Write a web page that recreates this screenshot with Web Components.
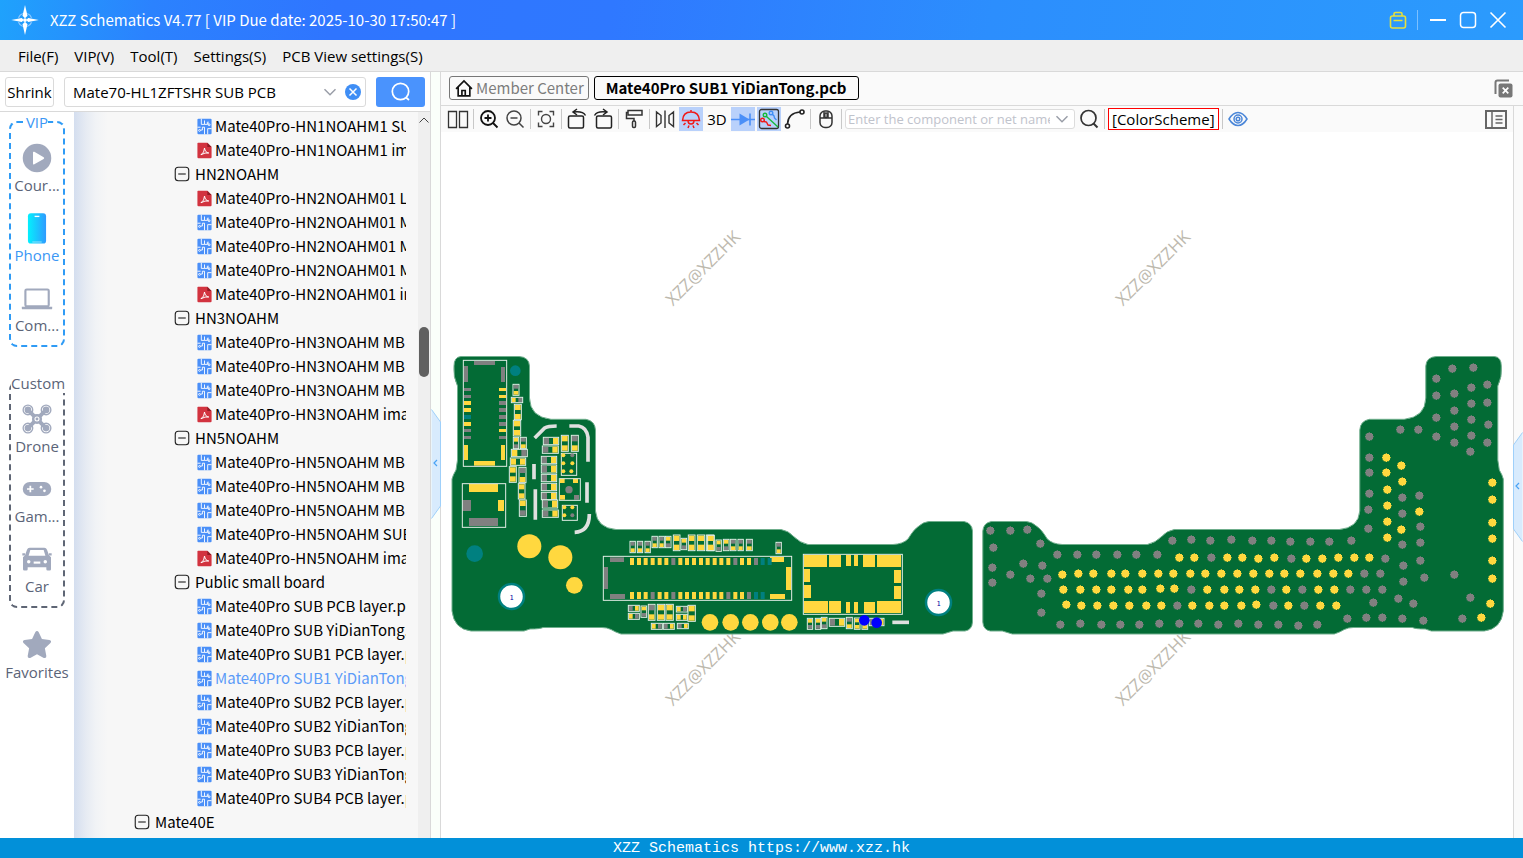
<!DOCTYPE html>
<html lang="en">
<head>
<meta charset="utf-8">
<title>XZZ Schematics</title>
<style>
  html, body {
    height: 100%;
    margin: 0;
  }

  body {
    --label-font: 'Noto Sans CJK SC', 'Noto Sans', sans-serif;
    font-family: 'Open Sans', 'Noto Sans', sans-serif;
    font-size: 15px;
    line-height: 24px;
    color: #000;
    overflow: hidden;
  }
</style>
</head>
<body>
<app-shell>
  <title-bar slot="title">XZZ Schematics V4.77 [ VIP Due date: 2025-10-30 17:50:47 ]</title-bar>
  <menu-bar slot="menu" items="File(F)|VIP(V)|Tool(T)|Settings(S)|PCB View settings(S)"></menu-bar>
  <search-bar slot="search" value="Mate70-HL1ZFTSHR SUB PCB"></search-bar>

  <category-rail slot="rail">
    <category-group label="VIP" tone="vip">
      <category-item icon="course">Cour...</category-item>
      <category-item icon="phone" active>Phone</category-item>
      <category-item icon="laptop">Com...</category-item>
    </category-group>
    <category-group label="Custom">
      <category-item icon="drone">Drone</category-item>
      <category-item icon="gamepad">Gam...</category-item>
      <category-item icon="car">Car</category-item>
    </category-group>
    <category-item icon="star">Favorites</category-item>
  </category-rail>

  <file-tree slot="tree"></file-tree>
  <panel-handle slot="split" side="left"></panel-handle>

  <tab-strip slot="tabs"></tab-strip>
  <tool-bar slot="tools"></tool-bar>
  <board-view slot="canvas"></board-view>
  <panel-handle slot="dock" side="right"></panel-handle>
  <status-bar slot="status">XZZ Schematics https://www.xzz.hk</status-bar>
</app-shell>

<script>
// Icons, all on a 24x24 grid
const ICONS = {
  logo: '<g fill="#fff"><path d="M12 0l2 8.6-2 2-2-2zM12 24l2-8.6-2-2-2 2zM1 12l8.400-1.600 1.600 1.600-1.600 1.600zM23 12l-8.400-1.600-1.600 1.600 1.600 1.600z"/><circle cx="12" cy="12" r="1.500"/></g><circle cx="12" cy="12" r="5.500" fill="none" stroke="#8cc8ff" stroke-width="1" stroke-dasharray="5 3.600" stroke-dashoffset="-1.800"/>',
  bag: '<g fill="none" stroke="#e6e03c" stroke-width="1.600"><rect x="4.500" y="8" width="15" height="12" rx="2"/><path d="M8 8V6q0-1.500 1.500-1.500h5Q16 4.500 16 6v2M7.500 12.500h9"/></g>',
  minimize: '<path d="M4 12h16" stroke="#fff" stroke-width="2"/>',
  maximize: '<rect x="4.500" y="4.500" width="15" height="15" rx="3" fill="none" stroke="#fff" stroke-width="1.500"/>',
  close: '<path d="M4.500 4.500l15 15M19.500 4.500l-15 15" stroke="#fff" stroke-width="1.600"/>',
  chevron: '<path d="M6 9l6 6 6-6" fill="none" stroke="#9a9ea8" stroke-width="1.600"/>',
  up: '<path d="M3 15l9-9 9 9" fill="none" stroke="#444" stroke-width="2"/>',
  clear: '<circle cx="12" cy="12" r="8" fill="#3f8ef5"/><path d="M8.500 8.500l7 7M15.500 8.500l-7 7" stroke="#fff" stroke-width="1.500"/>',
  searchWhite: '<circle cx="11.500" cy="11.500" r="8.200" fill="none" stroke="#fff" stroke-width="1.700"/><path d="M17 17.500l3 2.500" stroke="#fff" stroke-width="1.700"/>',
  search: '<circle cx="11.500" cy="11" r="7.500" fill="none" stroke="#333" stroke-width="1.700"/><path d="M16.500 16.500l4 4" stroke="#333" stroke-width="2"/>',
  course: '<circle cx="12" cy="12" r="10.700" fill="#a1a9bd"/><path d="M9 7.800v8.400q0 1 1 .5l7-4q.8-.6 0-1.200l-7-4.100q-1-.5-1 .4z" fill="#fff"/>',
  phone: '<defs><linearGradient id="p"><stop offset="0" stop-color="#04f0fd"/><stop offset="1" stop-color="#2f9bff"/></linearGradient></defs><rect x="5.200" y=".9" width="13.600" height="22.800" rx="2.200" fill="url(#p)"/><path d="M10.200 3.300h3.600" stroke="#fff" stroke-width="1"/><path d="M8.500 22.500h7" stroke="#9fe6ff" stroke-width=".7"/>',
  laptop: '<rect x="3.300" y="5.600" width="17.500" height="12.700" rx="1" fill="none" stroke="#a1a9bd" stroke-width="1.600"/><path d="M.6 18.500h22.800v1.300q0 .7-.8.700H1.400q-.8 0-.8-.7z" fill="#a1a9bd"/>',
  drone: '<g fill="none" stroke="#a1a9bd"><path d="M5 5l14 14M19 5L5 19" stroke-width="3"/><circle cx="5.200" cy="5.200" r="3.600" stroke-width="1"/><circle cx="18.800" cy="5.200" r="3.600" stroke-width="1"/><circle cx="5.200" cy="18.800" r="3.600" stroke-width="1"/><circle cx="18.800" cy="18.800" r="3.600" stroke-width="1"/></g><g fill="#a1a9bd"><circle cx="5.200" cy="5.200" r="2.500"/><circle cx="18.800" cy="5.200" r="2.500"/><circle cx="5.200" cy="18.800" r="2.500"/><circle cx="18.800" cy="18.800" r="2.500"/><circle cx="12" cy="12" r="3.800"/></g><circle cx="12" cy="12" r="1.500" fill="none" stroke="#fff" stroke-width=".8"/>',
  gamepad: '<rect x="1.300" y="6.700" width="21.400" height="10.600" rx="5.300" fill="#a1a9bd"/><path d="M7 9.500v5M4.500 12h5" stroke="#fff" stroke-width="1.300"/><circle cx="15" cy="10.600" r="1" fill="#fff"/><circle cx="17.600" cy="13.400" r="1" fill="#fff"/>',
  car: '<path d="M6.500 3.500h11q1.500 0 2 1.500l1.500 4.200 1.500 1.500v9q0 1-1 1h-1.500q-1 0-1-1v-1.500H5v1.500q0 1-1 1H2.500q-1 0-1-1v-9L3 9.200 4.500 5q.5-1.500 2-1.500z" fill="#a1a9bd"/><path d="M7 5.300h10l1.300 4.200H5.700z" fill="#fff"/><path d="M1 8.500h2M21 8.500h2" stroke="#a1a9bd" stroke-width="1.600"/><circle cx="5.800" cy="14" r="1.300" fill="#fff"/><circle cx="18.200" cy="14" r="1.300" fill="#fff"/><path d="M9.500 14.700h5" stroke="#fff" stroke-width="1.600"/>',
  star: '<path d="M12 1.500q.8 0 1.300 1l2.400 5 5.600.8q2 .5.800 2.200l-4.200 4 1.100 5.800q.1 2-1.900 1.400L12 19l-5.100 2.700q-2 .5-1.900-1.400l1.100-5.800-4.200-4q-1.200-1.700.8-2.200l5.600-.8 2.400-5q.5-1 1.300-1z" fill="#a1a9bd"/>',
  board: '<rect x="2" y="1" width="20" height="22" rx="1.500" fill="#4a8ff8"/><g fill="none" stroke="#fff" stroke-width="1.300"><path d="M7.500 1v8H12V3.500M12 9h4V6M17 9.500V5M12 23V13H9v4H6.500M16.500 23v-8H22M2 13h4.500"/><circle cx="18.500" cy="9.500" r="1.300"/><circle cx="5" cy="17.500" r="1.300"/></g>',
  pdf: '<path d="M3 1h13l6 6v14.500q0 1.500-1.500 1.500h-17Q2 23 2 21.500v-19Q2 1 3 1z" fill="#d2333f"/><path d="M16 1l6 6h-6z" fill="#8e1b25"/><path d="M7 18q5-3 5-9.500Q13 15 18 15.500q-5-1-11 2.500z" fill="none" stroke="#fff" stroke-width="1.400"/>',
  minus: '<rect x="3" y="3" width="18" height="18" rx="4" fill="none" stroke="#222" stroke-width="1.500"/><path d="M7 12h10" stroke="#222" stroke-width="1.500"/>',
  home: '<g fill="none" stroke="#111" stroke-width="2"><path d="M2.500 13L12 3.500 21.500 13M5 11v10.500h14V11M9.500 21.500v-6.500h4v6.500"/></g>',
  closeAll: '<path d="M4.500 18V6.500q0-2 2-2H18" fill="none" stroke="#777" stroke-width="2"/><rect x="7.500" y="7.500" width="14" height="14" rx="2" fill="#777"/><path d="M11.700 11.700l5.600 5.600M17.300 11.700l-5.600 5.600" stroke="#fff" stroke-width="1.700"/>',
  dock: '<rect x="2" y="4" width="20" height="17" fill="none" stroke="#666" stroke-width="2"/><path d="M8 4v17" stroke="#666" stroke-width="1.500"/><path d="M11.500 9h7M11.500 12.500h7M11.500 16h7" stroke="#666" stroke-width="1.300"/>',
  columns: '<path d="M2.500 4.500h8v16h-8zM13.500 4.500h8v16h-8z" fill="none" stroke="#333" stroke-width="1.300"/>',
  zoomIn: '<g fill="none" stroke="#111" stroke-width="1.800"><circle cx="11" cy="11" r="7"/><path d="M16 16l4.500 4.500M7.500 11h7M11 7.500v7"/></g>',
  zoomOut: '<g fill="none" stroke="#444" stroke-width="1.500"><circle cx="11" cy="11" r="7"/><path d="M16 16l4.500 4.500M7.500 11h7"/></g>',
  fit: '<g fill="none" stroke="#444" stroke-width="1.400"><circle cx="12" cy="12" r="4.500"/><path d="M4.500 8.500v-4h4M15.500 4.500h4v4M19.500 15.500v4h-4M8.500 19.500h-4v-4"/></g>',
  rotateLeft: '<g fill="none" stroke="#222" stroke-width="1.500"><rect x="3.500" y="9" width="15" height="12" rx="1.500"/><path d="M20.500 8.500Q18 4 9 5M12 2L8 5l4 3"/></g>',
  rotateRight: '<g fill="none" stroke="#222" stroke-width="1.500"><rect x="5.500" y="9" width="15" height="12" rx="1.500"/><path d="M3.500 8.500Q6 4 15 5M12 2l4 3-4 3"/></g>',
  paint: '<g fill="none" stroke="#333" stroke-width="1.500"><rect x="6" y="3.500" width="14" height="4.500"/><path d="M6 5.500H4.500v6H12V14"/><rect x="10.500" y="14" width="3" height="6.500" rx="1.200"/></g>',
  mirror: '<g fill="none" stroke="#333" stroke-width="1.400"><path d="M3.500 5v14.500l4.500-3.500V8.500zM20.500 5v14.500L16 16V8.500zM12 3.500v17.500"/></g>',
  lamp: '<g fill="none" stroke="#f01818" stroke-width="1.500"><path d="M3.500 13.500Q4 5 12 5t8.500 8.500zM12 5V3M9 13.500Q9 17 12 17t3-3.500"/><path d="M6.500 16l-2 2M10 18.500l-1 2.500M14 18.500l1 2.500M17.500 16l2 2"/></g>',
  diode: '<path d="M0 12.500h24" stroke="#4a8ff8" stroke-width="1.500"/><path d="M8.500 6.500l10 6-10 6z" fill="#4a8ff8"/><path d="M19 6.500v12" stroke="#4a8ff8" stroke-width="1.600"/>',
  route: '<rect x="2.500" y="2.500" width="19" height="19" rx="2" fill="none" stroke="#333" stroke-width="1.300"/><g fill="none" stroke-width="1.400"><g stroke="#16b83a"><circle cx="8" cy="8" r="1.800"/><path d="M9.500 9.500L21 20"/></g><g stroke="#3f8ef5"><circle cx="14" cy="6" r="1.800"/><path d="M15.500 7.500q2 1 2 3.500l2 2"/></g><g stroke="#f01818"><circle cx="5.500" cy="13" r="1.800"/><path d="M7 14.500l2.500.5 1.500 3 3 .5"/></g></g>',
  curve: '<g fill="none" stroke="#222" stroke-width="1.600"><circle cx="4.500" cy="19" r="2"/><circle cx="19" cy="5" r="2"/><path d="M4.500 17Q5 6 17 5"/></g>',
  mouse: '<g fill="none" stroke="#333" stroke-width="1.500"><rect x="6" y="4" width="12" height="16.500" rx="5"/><path d="M6 11h12M10 4.500V11M14 4.500V11"/><rect x="10.800" y="6" width="2.400" height="4.500" rx="1"/></g>',
  eye: '<g fill="none" stroke="#4a86d8" stroke-width="1.500"><path d="M3 12q4-6.500 9-6.500T21 12q-4 6.500-9 6.500T3 12z"/><circle cx="12" cy="12" r="4"/><circle cx="12" cy="12" r="1.800"/></g>'
};

class AppIcon extends HTMLElement {
  connectedCallback() {
    const size = this.getAttribute('size') || 24;
    this.attachShadow({ mode: 'open' }).innerHTML = `
      <style>
        :host { display: inline-flex; flex: none; }
        svg { display: block; }
      </style>
      <svg width="${size}" height="${size}" viewBox="0 0 24 24" aria-hidden="true">${ICONS[this.getAttribute('name')] || ''}</svg>
    `;
  }
}
customElements.define('app-icon', AppIcon);

class AppShell extends HTMLElement {
  constructor() {
    super();
    this.attachShadow({ mode: 'open' }).innerHTML = `
      <style>
        :host {
          display: grid;
          grid-template-rows: 40px 32px minmax(0, 1fr) 20px;
          height: 100vh;
        }
        main {
          display: grid;
          grid-template-columns: 430px 11px minmax(0, 1fr);
          min-height: 0;
        }
        .left {
          display: grid;
          grid-template-rows: 40px minmax(0, 1fr);
          min-height: 0;
        }
        .browse {
          display: grid;
          grid-template-columns: 74px minmax(0, 1fr);
          min-height: 0;
        }
        .right {
          display: grid;
          grid-template-rows: 34px minmax(0, 1fr);
          min-height: 0;
        }
        .work {
          display: grid;
          grid-template-columns: minmax(0, 1fr) 10px;
          min-height: 0;
        }
        .view {
          display: grid;
          grid-template-rows: 26px minmax(0, 1fr);
          min-height: 0;
        }
      </style>
      <slot name="title"></slot>
      <slot name="menu"></slot>
      <main>
        <section class="left">
          <slot name="search"></slot>
          <div class="browse"><slot name="rail"></slot><slot name="tree"></slot></div>
        </section>
        <slot name="split"></slot>
        <section class="right">
          <slot name="tabs"></slot>
          <div class="work">
            <div class="view"><slot name="tools"></slot><slot name="canvas"></slot></div>
            <slot name="dock"></slot>
          </div>
        </section>
      </main>
      <slot name="status"></slot>
    `;
  }
}
customElements.define('app-shell', AppShell);

class TitleBar extends HTMLElement {
  constructor() {
    super();
    this.attachShadow({ mode: 'open' }).innerHTML = `
      <style>
        :host {
          display: flex;
          align-items: center;
          padding: 0 13px 0 10px;
          color: #fff;
          font-family: var(--label-font);
          background: linear-gradient(100deg, #1fa2fc 0, #2b82fe 10%, #2f75ff 22%, #2f78ff 40%, #2c8efd 65%, #2b9bfd 100%);
        }
        .name { flex: 1; margin-left: 10px; }
        .tools { display: flex; align-items: center; gap: 6px; }
        button { display: flex; padding: 0; border: 0; background: none; }
        hr { width: 1px; height: 20px; margin: 0 2px 0 1px; border: 0; background: #7cc0ff; }
      </style>
      <app-icon name="logo" size="30"></app-icon>
      <span class="name"><slot></slot></span>
      <div class="tools">
        <button aria-label="Toolbox"><app-icon name="bag"></app-icon></button>
        <hr>
        <button aria-label="Minimize"><app-icon name="minimize"></app-icon></button>
        <button aria-label="Maximize"><app-icon name="maximize"></app-icon></button>
        <button aria-label="Close"><app-icon name="close"></app-icon></button>
      </div>
    `;
  }
}
customElements.define('title-bar', TitleBar);

class MenuBar extends HTMLElement {
  connectedCallback() {
    const items = this.getAttribute('items').split('|');
    this.attachShadow({ mode: 'open' }).innerHTML = `
      <style>
        :host {
          display: block;
          background: #efefef;
          border-bottom: 1px solid #d9d9d9;
        }
        nav { display: flex; align-items: center; gap: 16px; height: 100%; padding-left: 18px; }
        button { padding: 0; border: 0; background: none; font: inherit; color: inherit; }
      </style>
      <nav>${items.map(item => `<button>${item}</button>`).join('')}</nav>
    `;
  }
}
customElements.define('menu-bar', MenuBar);

class SearchBar extends HTMLElement {
  connectedCallback() {
    this.attachShadow({ mode: 'open' }).innerHTML = `
      <style>
        :host {
          display: flex;
          align-items: center;
          gap: 10px;
          box-sizing: border-box;
          padding: 0 5px;
          background: #fff;
          border-bottom: 1px solid #d9d9d9;
        }
        button { padding: 0; border: 0; background: none; font: inherit; color: inherit; display: flex; align-items: center; justify-content: center; }
        .shrink { box-sizing: border-box; width: 49px; height: 30px; border: 1px solid #dadada; border-radius: 3px; }
        .combo {
          flex: 1;
          min-width: 0;
          display: flex;
          align-items: center;
          box-sizing: border-box;
          height: 30px;
          padding: 0 0 0 8px;
          border: 1px solid #dadada;
          border-radius: 3px;
        }
        input { flex: 1; min-width: 0; padding: 0; border: 0; outline: 0; background: none; font: inherit; color: inherit; }
        .go { width: 49px; height: 30px; border-radius: 3px; background: #4a93fd; }
      </style>
      <button class="shrink">Shrink</button>
      <div class="combo">
        <input type="text" aria-label="Search files" value="${this.getAttribute('value')}">
        <button aria-label="History"><app-icon name="chevron" size="22"></app-icon></button>
        <button aria-label="Clear"><app-icon name="clear"></app-icon></button>
      </div>
      <button class="go" aria-label="Search"><app-icon name="searchWhite"></app-icon></button>
    `;
  }
}
customElements.define('search-bar', SearchBar);

class CategoryRail extends HTMLElement {
  constructor() {
    super();
    this.attachShadow({ mode: 'open' }).innerHTML = `
      <style>
        :host {
          display: flex;
          flex-direction: column;
          align-items: center;
          gap: 21px;
          background: #fff;
          overflow: hidden;
        }
        ::slotted(*) { flex: none; }
        ::slotted(category-group:nth-of-type(2)) { margin-top: 5px; }
      </style>
      <slot></slot>
    `;
  }
}
customElements.define('category-rail', CategoryRail);

class CategoryGroup extends HTMLElement {
  connectedCallback() {
    const vip = this.getAttribute('tone') === 'vip';
    this.attachShadow({ mode: 'open' }).innerHTML = `
      <style>
        :host { display: block; width: 56px; }
        fieldset {
          display: flex;
          flex-direction: column;
          align-items: center;
          gap: 16px;
          min-width: 0;
          margin: 0;
          padding: 10px 0 9px;
          border: 2px dashed ${vip ? '#2f9bf5' : '#5f6675'};
          border-radius: 8px;
        }
        legend {
          margin: 0 auto;
          padding: 0;
          line-height: 20px;
          color: ${vip ? '#3b97f5' : '#5b6478'};
        }
      </style>
      <fieldset>
        <legend>${this.getAttribute('label')}</legend>
        <slot></slot>
      </fieldset>
    `;
  }
}
customElements.define('category-group', CategoryGroup);

class CategoryItem extends HTMLElement {
  connectedCallback() {
    this.attachShadow({ mode: 'open' }).innerHTML = `
      <style>
        :host { display: block; }
        button {
          display: flex;
          flex-direction: column;
          align-items: center;
          padding: 0;
          border: 0;
          background: none;
          font: inherit;
          line-height: 22px;
          color: ${this.hasAttribute('active') ? '#3b97f5' : '#5b6478'};
        }
      </style>
      <button><app-icon name="${this.getAttribute('icon')}" size="32"></app-icon><slot></slot></button>
    `;
  }
}
customElements.define('category-item', CategoryItem);

// [kind, label]; kinds: group, board, pdf, root
const FILES = [
  ['board', 'Mate40Pro-HN1NOAHM1 SUB'],
  ['pdf', 'Mate40Pro-HN1NOAHM1 image'],
  ['group', 'HN2NOAHM'],
  ['pdf', 'Mate40Pro-HN2NOAHM01 LCD'],
  ['board', 'Mate40Pro-HN2NOAHM01 MB'],
  ['board', 'Mate40Pro-HN2NOAHM01 MB'],
  ['board', 'Mate40Pro-HN2NOAHM01 MB'],
  ['pdf', 'Mate40Pro-HN2NOAHM01 image'],
  ['group', 'HN3NOAHM'],
  ['board', 'Mate40Pro-HN3NOAHM MB'],
  ['board', 'Mate40Pro-HN3NOAHM MB'],
  ['board', 'Mate40Pro-HN3NOAHM MB'],
  ['pdf', 'Mate40Pro-HN3NOAHM image'],
  ['group', 'HN5NOAHM'],
  ['board', 'Mate40Pro-HN5NOAHM MB'],
  ['board', 'Mate40Pro-HN5NOAHM MB'],
  ['board', 'Mate40Pro-HN5NOAHM MB'],
  ['board', 'Mate40Pro-HN5NOAHM SUB'],
  ['pdf', 'Mate40Pro-HN5NOAHM image'],
  ['group', 'Public small board'],
  ['board', 'Mate40Pro SUB PCB layer.pcb'],
  ['board', 'Mate40Pro SUB YiDianTong.pcb'],
  ['board', 'Mate40Pro SUB1 PCB layer.pcb'],
  ['board', 'Mate40Pro SUB1 YiDianTong.pcb', true],
  ['board', 'Mate40Pro SUB2 PCB layer.pcb'],
  ['board', 'Mate40Pro SUB2 YiDianTong.pcb'],
  ['board', 'Mate40Pro SUB3 PCB layer.pcb'],
  ['board', 'Mate40Pro SUB3 YiDianTong.pcb'],
  ['board', 'Mate40Pro SUB4 PCB layer.pcb'],
  ['root', 'Mate40E']
];

class FileTree extends HTMLElement {
  constructor() {
    super();
    this.attachShadow({ mode: 'open' }).innerHTML = `
      <style>
        :host {
          display: grid;
          grid-template-columns: minmax(0, 1fr) 12px;
          min-height: 0;
          font-family: var(--label-font);
          background: linear-gradient(90deg, #d4deef 0, #e6ebf3 12px, #f1f3f6 22px, #f7f7f7 34px);
        }
        ul {
          margin: 0 12px 0 0;
          padding: 2px 0 0;
          list-style: none;
          overflow: hidden;
        }
        button {
          display: flex;
          align-items: center;
          gap: 4px;
          height: 24px;
          padding: 0;
          border: 0;
          background: none;
          font: inherit;
          color: inherit;
          white-space: nowrap;
        }
        .root { margin-left: 59px; }
        .group { margin-left: 99px; }
        .board, .pdf { gap: 2px; margin-left: 122px; }
        .current { color: #5b9bf8; }
        .scroll {
          display: grid;
          grid-template-columns: 100%;
          grid-template-rows: 18px 197fr 50px 461fr;
          justify-items: center;
          background: #efefef;
        }
        .scroll button { height: 18px; }
        .thumb { grid-row: 3; width: 10px; border-radius: 5px; background: #606060; }
      </style>
      <ul>
        ${FILES.map(([kind, label, current]) => `
          <li><button class="${kind}${current ? ' current' : ''}">${this.icon(kind)}<span>${label}</span></button></li>
        `).join('')}
      </ul>
      <div class="scroll">
        <button aria-label="Scroll up"><app-icon name="up" size="12"></app-icon></button>
        <div class="thumb"></div>
      </div>
    `;
  }

  icon(kind) {
    if (kind === 'board' || kind === 'pdf') {
      return `<app-icon name="${kind}" size="17"></app-icon>`;
    }
    return '<app-icon name="minus" size="18"></app-icon>';
  }
}
customElements.define('file-tree', FileTree);

class PanelHandle extends HTMLElement {
  connectedCallback() {
    const left = this.getAttribute('side') === 'left';
    const shape = left ? 'M.5 .5L9.500 13v84L.5 109.500' : 'M9.500 .5L.5 13v84l9 12.500';
    this.attachShadow({ mode: 'open' }).innerHTML = `
      <style>
        :host {
          display: flex;
          align-items: center;
          box-sizing: border-box;
          padding-top: ${left ? 18 : 30}px;
          background: ${left ? '#fafffa' : '#fafafa'};
          border-left: 1px solid #d9d9d9;
          border-right: ${left ? '1px solid #d9d9d9' : '0'};
        }
        button {
          display: flex;
          margin: ${left ? '0 -1px 0 0' : '0 0 0 -1px'};
          padding: 0;
          border: 0;
          background: none;
        }
      </style>
      <button aria-label="Toggle panel">
        <svg width="10" height="110" viewBox="0 0 10 110">
          <path d="${shape}" fill="#d8ebfd" stroke="#9fd0fa"/>
          <path d="M6 51L3 54l3 3" fill="none" stroke="#4aa3f5" stroke-width="1.200"/>
        </svg>
      </button>
    `;
  }
}
customElements.define('panel-handle', PanelHandle);

class TabStrip extends HTMLElement {
  constructor() {
    super();
    this.attachShadow({ mode: 'open' }).innerHTML = `
      <style>
        :host {
          display: flex;
          align-items: center;
          gap: 5px;
          box-sizing: border-box;
          padding: 0 8px 1px;
          font-family: var(--label-font);
          background: #fafafa;
          border-bottom: 1px solid #d9d9d9;
        }
        button { display: flex; align-items: center; padding: 0; border: 0; background: none; font: inherit; color: inherit; }
        .tab {
          box-sizing: border-box;
          height: 24px;
          gap: 2px;
          padding: 0 4px;
          border: 1px solid #777;
          border-radius: 3px;
          color: #7d7d7d;
        }
        .current { padding: 0 11px; border-color: #000; color: #000; font-weight: 700; }
        .all { margin-left: auto; }
      </style>
      <button class="tab"><app-icon name="home" size="20"></app-icon>Member Center</button>
      <button class="tab current">Mate40Pro SUB1 YiDianTong.pcb</button>
      <button class="all" aria-label="Close all tabs"><app-icon name="closeAll"></app-icon></button>
    `;
  }
}
customElements.define('tab-strip', TabStrip);

// '|' draws a separator, '*' marks a pressed tool
const TOOLS = ['columns', '|', 'zoomIn', 'zoomOut', '|', 'fit', '|', 'rotateLeft', 'rotateRight', '|', 'paint', '|',
  'mirror', '*lamp', '3D', '*diode', '*route', 'curve', '|', 'mouse', '|'];

class ToolBar extends HTMLElement {
  constructor() {
    super();
    this.attachShadow({ mode: 'open' }).innerHTML = `
      <style>
        :host {
          display: flex;
          align-items: center;
          gap: 2px;
          padding: 0 5px;
          background: #fafafa;
        }
        button {
          display: flex;
          align-items: center;
          justify-content: center;
          min-width: 24px;
          height: 24px;
          padding: 0;
          border: 0;
          background: none;
          font: inherit;
          color: inherit;
        }
        .on { background: #b9d1fb; }
        hr { width: 1px; height: 20px; margin: 0 1px; border: 0; background: #c8c8c8; }
        .net {
          display: flex;
          align-items: center;
          box-sizing: border-box;
          width: 230px;
          height: 20px;
          padding-left: 2px;
          border: 1px solid #dcdcdc;
          border-radius: 3px;
          background: #fff;
        }
        .net button { height: 18px; }
        input { flex: 1; min-width: 0; padding: 0; border: 0; outline: 0; background: none; font: inherit; font-size: 13px; }
        input::placeholder { color: #bfc3cc; opacity: 1; }
        .scheme { height: 22px; padding: 0 3px; border: 1px solid #f00; background: #fff; }
        .dock { margin-left: auto; }
      </style>
      ${TOOLS.map(tool => this.renderTool(tool)).join('')}
      <div class="net">
        <input type="text" aria-label="Component or net name" placeholder="Enter the component or net name to search">
        <button aria-label="Recent names"><app-icon name="chevron" size="22"></app-icon></button>
      </div>
      <button aria-label="Find"><app-icon name="search"></app-icon></button>
      <hr>
      <button class="scheme">[ColorScheme]</button>
      <hr>
      <button aria-label="Visibility"><app-icon name="eye"></app-icon></button>
      <button class="dock" aria-label="Side list"><app-icon name="dock"></app-icon></button>
    `;
  }

  renderTool(tool) {
    if (tool === '|') return '<hr>';
    if (tool === '3D') return '<button>3D</button>';
    const on = tool[0] === '*';
    const name = on ? tool.slice(1) : tool;
    return `<button class="${on ? 'on' : ''}" aria-label="${name}"><app-icon name="${name}"></app-icon></button>`;
  }
}
customElements.define('tool-bar', ToolBar);

const COLORS = { y: '#ffd83f', g: '#808080', t: '#008080', b: '#0000ff' };

// Board data uses 3 units per pixel. Each zone has its own origin.
// pads: color, x, y, w, h   parts: direction + two pad colors, x, y, w, h   dots: color, x, y, r
const ZONES = [
  {
    x: 448, y: 350,
    boxes: [[46, 31, 130, 318], [43, 401, 130, 131], [340, 310, 46, 66], [334, 386, 63, 65], [343, 466, 45, 45]],
    pads: `g 78 33 63 12,g 48 48 12 48,g 159 51 12 45,g 48 114 21 9,g 48 135 21 9,y 48 153 21 12,y 48 174 21 12,
      t 48 195 21 12,y 48 216 21 12,g 48 237 21 9,g 48 258 21 9,y 153 114 21 9,y 153 135 21 9,g 153 153 21 12,
      g 153 174 21 12,g 153 195 21 12,g 153 216 21 12,y 153 237 21 9,g 153 258 21 9,y 48 285 12 45,y 159 285 12 45,
      y 78 333 63 14,y 63 402 87 24,g 43 450 26 33,y 150 450 18 33,g 63 504 87 24,y 336 386 14 13,y 375 386 15 13,
      y 336 435 15 14,g 378 435 15 14`,
    parts: `vgy 195 103 18 33,hyg 190 142 34 16,vyy 199 163 21 46,vyy 196 211 22 47,vyg 196 262 16 34,vgy 217 262 18 34,
      hyg 190 298 48 22,hyy 187 324 46 22,vyy 184 350 21 47,vgy 213 352 21 46,vyy 211 401 20 46,vyg 214 450 21 49,
      hgy 286 262 46 22,hgy 283 288 48 22,hgy 280 319 46 22,hgy 280 345 46 24,hgy 280 373 46 22,hgy 280 400 46 22,
      hgy 280 427 46 22,hgy 283 450 46 24,hgy 283 480 48 22,vyy 340 256 21 48,vgy 370 256 21 48`,
    dots: `t 202 62 16,y 346 316 6,g 373 316 6,y 346 340 6,y 373 340 6,y 346 364 6,y 370 364 6,g 363 419 11,
      y 349 472 6,y 373 472 6,y 349 496 6,g 373 496 6`,
    silk: 'M260 264L290 234Q300 228 326 228M364 228H392Q416 232 420 262V335M417 397V458M258 342V388M262 418V509M424 492Q424 545 380 547'
  },
  {
    x: 448, y: 520,
    boxes: [[466, 109, 565, 132]],
    pads: `g 486 112 42 14,g 468 141 12 66,g 486 222 45 15,y 966 111 42 15,y 1014 141 15 69,y 966 222 45 15,
      ${connectorRow(114, 'yyyyyygyyyyyyyygyygtt')},${connectorRow(216, 'yyygyygyyyyyyygyygtt')}`,
    parts: `vgy 546 64 16 34,vgy 568 64 16 34,vgy 591 64 16 34,vgy 612 49 16 34,vgy 633 49 16 34,vyg 652 49 17 34,
      vyy 676 45 20 47,vyg 699 55 17 34,vyy 721 45 20 47,vyy 748 45 22 47,vyy 775 45 22 47,hgy 541 256 33 18,
      hyg 541 280 33 18,vyg 579 258 17 34,vgy 601 253 20 48,vyy 628 253 22 48,vyy 654 253 22 48,hyg 685 259 33 17,
      hyy 685 283 33 18,vyy 720 256 22 48,hyg 610 310 33 18,hgy 646 310 33 18,hgy 688 310 33 16`,
    dots: 't 80 101 25,y 244 79 36,y 337 112 36,y 379 196 25,y 786 307 25',
    silk: ''
  },
  {
    x: 710, y: 510,
    boxes: [[280, 133, 297, 180]],
    pads: `y 282 135 69 36,y 357 135 36 36,y 408 135 15 33,y 432 135 12 33,y 459 135 36 36,y 501 135 72 36,y 282 177 18 39,
      y 282 225 21 39,y 552 180 21 39,y 552 228 21 39,y 282 273 72 36,y 357 273 36 36,y 408 276 12 33,y 432 276 12 33,
      y 462 276 33 33,y 501 273 72 36`,
    parts: `vyy -7 76 20 46,vyg 18 90 16 34,vyg 40 88 17 34,vgy 61 88 17 34,vgy 84 88 16 34,vgy 109 88 18 34,
      vgy 198 97 16 34,vyg 292 325 16 33,vyg 316 325 16 33,vyg 334 322 17 34,hgy 358 325 46 24,vgy 409 322 18 34,
      vyy 433 324 17 34,vyy 456 324 17 34,hgy 478 325 44 22`,
    dots: 'y 62 337 25,y 121 337 25,y 181 337 25,y 238 337 25,b 463 331 16,b 500 338 16',
    silk: 'M547 337H597'
  },
  {
    x: 980, y: 510,
    vias: {
      g: `31 62,91 62,142 59,181 101,40 113,130 161,187 167,37 173,91 194,151 206,202 206,37 218,184 251,184 308,
        232 134,292 134,349 134,412 134,469 134,532 134,577 92,634 89,691 92,754 89,694 143,634 239,592 287,241 344,
        301 341,364 344,421 344,478 344,538 341,598 341,655 341,715 344,775 341`,
      y: `598 143,643 143,742 143,787 143,247 194,295 191,340 191,394 191,436 191,487 191,535 191,580 191,631 191,
        676 191,724 191,772 191,250 239,301 239,349 239,394 239,445 239,487 239,541 236,583 236,682 239,733 239,
        778 239,259 284,304 287,352 287,400 287,448 287,499 287,544 287,637 287,688 287,733 287,784 287`
    }
  },
  {
    x: 1240, y: 350,
    vias: {
      g: `637 56,700 53,589 86,589 137,694 113,742 104,643 131,694 161,742 158,643 182,589 203,694 209,745 224,643 230,
        481 239,535 239,388 260,589 260,694 257,643 278,742 278,691 305,388 323,388 368,388 431,385 479,385 536,
        487 443,487 491,538 437,541 530,541 578,541 632,487 584,490 647,490 695,553 683,643 674,691 743,667 806,
        475 746,520 761,487 806,550 812,37 572,94 572,151 575,211 575,268 575,334 572,154 626,436 626,373 671,421 671,
        94 719,187 719,331 719,379 719,427 719,400 758,100 767,193 767,322 806,379 803,427 803,55 824,115 824,
        175 827,232 824`,
      y: `439 323,484 347,439 368,487 395,442 419,442 467,538 485,442 515,484 539,442 563,757 398,757 449,757 518,
        757 566,757 632,757 686,751 761,724 803,55 626,103 623,199 626,247 626,295 623,343 623,388 623,40 671,88 671,
        133 671,181 671,232 671,280 671,325 671,46 719,139 719,235 719,283 719,49 764,145 767,241 767,289 767`
    }
  }
];

function connectorRow(y, colors) {
  return [...colors].map((c, i) => `${c} ${546 + Math.round(i * 20.650)} ${y} 12 21`).join(',');
}

function rows(text) {
  return text ? text.split(',').map(row => row.trim().split(' ')) : [];
}

class BoardView extends HTMLElement {
  constructor() {
    super();
    this.attachShadow({ mode: 'open' }).innerHTML = `
      <style>
        :host { display: block; min-height: 0; background: #fff; }
        svg { display: block; width: 100%; height: 100%; }
        .mark { fill: #bdb9ae; font-size: 17px; text-anchor: middle; }
        .pin { fill: #0000a0; font: 7px 'DejaVu Sans Mono', monospace; text-anchor: middle; }
        .box { fill: none; stroke: #e3eee6; stroke-width: 3; }
        .silk { fill: none; stroke: #dfe0df; stroke-width: 11; }
      </style>
      <svg viewBox="441 132 1072 706" role="img" aria-label="Board view">
        <defs>
          <path id="outline" d="M461 356.500H519Q529 357 529.500 366V398Q530 417 551 419.300H586Q595 421 595.500 430V511Q597 528 616 529.500H781
            Q789 531 793 536Q800 543 808 544.500H893Q903 544 908 539Q914 529 919 526Q923 522 929 521.500H964Q972 523 972.500 531V622
            Q972 630 965 631H953L943 634H621Q615 632 611 629.500Q607 627.500 602 627.500H543Q540 629 530 629L524 631H471
            Q454 629 452 611V479Q453 475 456 470L457.500 460V386Q453 377 454 366Q454 357 461 356.500Z"/>
        </defs>
        ${[[703, 268], [1153, 268], [703, 668], [1153, 668]].map(([x, y]) => `
          <text class="mark" transform="translate(${x} ${y}) rotate(-45)" dy="6">XZZ@XZZHK</text>`).join('')}
        <g fill="#036b35" stroke="#6fae8c" stroke-width="1">
          <use href="#outline"/>
          <use href="#outline" transform="translate(1955.300 0) scale(-1 1)"/>
        </g>
        ${ZONES.map(zone => this.renderZone(zone)).join('')}
        ${[[511.500, 596.500], [938.500, 602.500]].map(([x, y]) => `
          <circle cx="${x}" cy="${y}" r="12.500" fill="#fff" stroke="#008080" stroke-width="2.500"/>
          <text class="pin" x="${x}" y="${y + 3}">1</text>`).join('')}
      </svg>
    `;
  }

  renderZone(zone) {
    const vias = Object.entries(zone.vias || {}).map(([c, list]) =>
      rows(list).map(([x, y]) => this.renderVia(x, y, COLORS[c])).join('')).join('');
    return `
      <g transform="translate(${zone.x} ${zone.y}) scale(.33333)">
        ${rows(zone.pads).map(([c, x, y, w, h]) => this.renderPad(c, x, y, w, h)).join('')}
        ${(zone.boxes || []).map(([x, y, w, h]) => `<rect class="box" x="${x}" y="${y}" width="${w}" height="${h}"/>`).join('')}
        ${zone.silk ? `<path class="silk" d="${zone.silk}"/>` : ''}
        ${rows(zone.parts).map(part => this.renderPart(part)).join('')}
        ${rows(zone.dots).map(([c, x, y, r]) => `<circle cx="${x}" cy="${y}" r="${r}" fill="${COLORS[c]}"/>`).join('')}
        ${vias}
      </g>
    `;
  }

  renderPad(c, x, y, w, h) {
    return `<rect x="${x}" y="${y}" width="${w}" height="${h}" fill="${COLORS[c]}"/>`;
  }

  // Two-pad component with a silkscreen frame
  renderPart([type, ...box]) {
    const [x, y, w, h] = box.map(Number);
    const long = type[0] === 'v' ? h : w;
    const pad = Math.round(long * 0.33);
    const pads = type[0] === 'v'
      ? this.renderPad(type[1], x + 2, y + 2, w - 4, pad) + this.renderPad(type[2], x + 2, y + h - pad - 2, w - 4, pad)
      : this.renderPad(type[1], x + 2, y + 2, pad, h - 4) + this.renderPad(type[2], x + w - pad - 2, y + 2, pad, h - 4);
    return `<rect class="box" x="${x}" y="${y}" width="${w}" height="${h}"/>${pads}`;
  }

  renderVia(x, y, fill) {
    return `<path transform="translate(${x} ${y})" fill="${fill}" d="M-2-13H2V-11H8V-8H11V-2H13V2H11V8H8V11H2V13H-2V11H-8V8H-11V2H-13V-2H-11V-8H-8V-11H-2Z"/>`;
  }
}
customElements.define('board-view', BoardView);

class StatusBar extends HTMLElement {
  constructor() {
    super();
    this.attachShadow({ mode: 'open' }).innerHTML = `
      <style>
        :host {
          display: block;
          background: #0290d9;
          color: #fff;
          font-family: 'Liberation Mono', monospace;
          line-height: 22px;
          text-align: center;
        }
      </style>
      <slot></slot>
    `;
  }
}
customElements.define('status-bar', StatusBar);
</script>
</body>
</html>
